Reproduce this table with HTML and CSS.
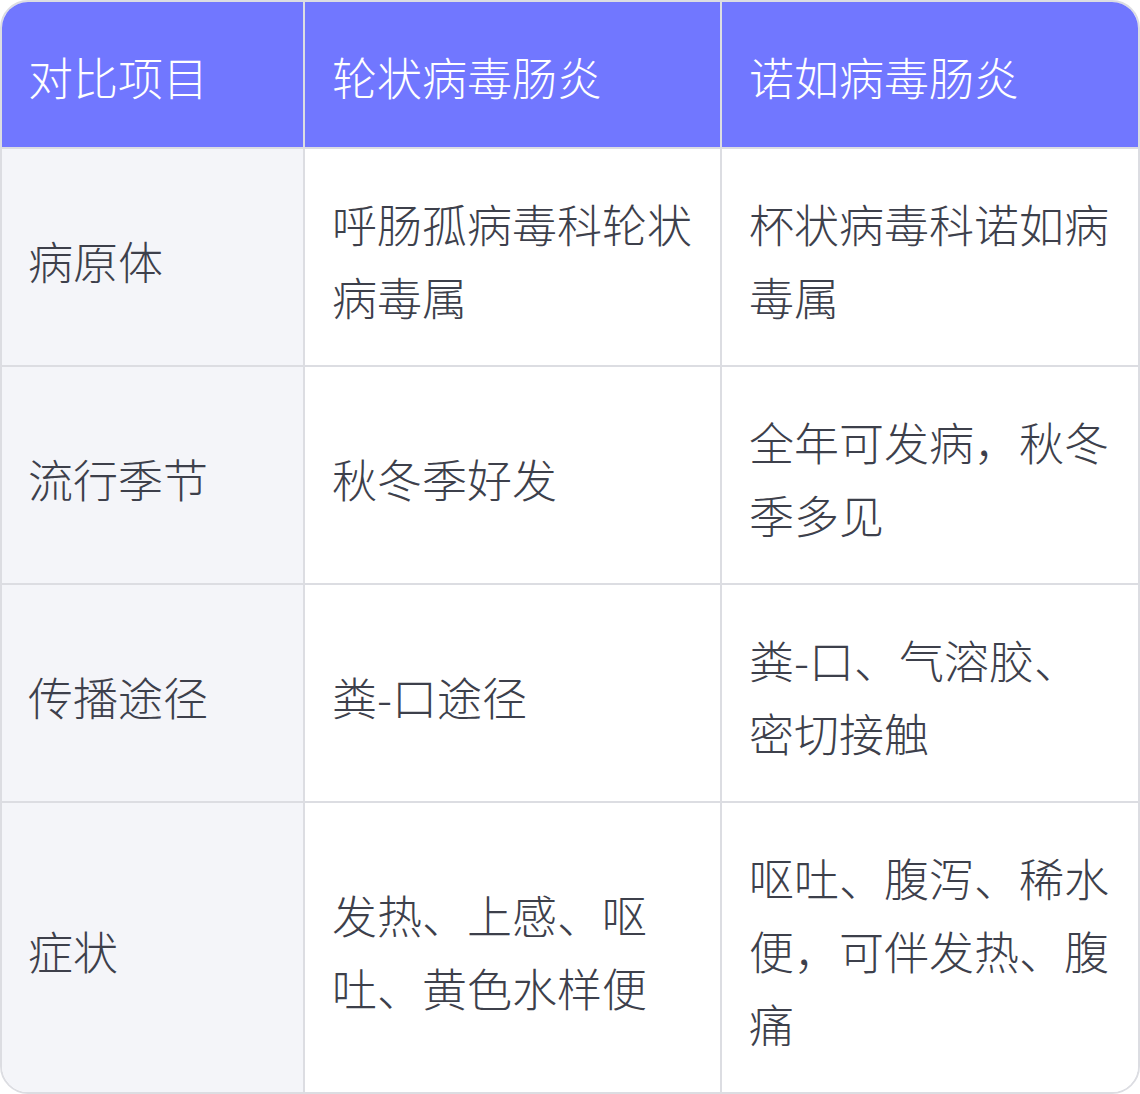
FILE: index.html
```html
<!DOCTYPE html>
<html lang="zh-CN">
<head>
<meta charset="utf-8">
<link rel="stylesheet" href="styles.css">
</head>
<body>
<div class="card">
  <table class="cmp">
    <colgroup>
      <col class="c1"><col class="c2"><col class="c3">
    </colgroup>
    <thead>
      <tr><th>对比项目</th><th>轮状病毒肠炎</th><th>诺如病毒肠炎</th></tr>
    </thead>
    <tbody>
      <tr><td class="key">病原体</td><td>呼肠孤病毒科轮状病毒属</td><td>杯状病毒科诺如病毒属</td></tr>
      <tr><td class="key">流行季节</td><td>秋冬季好发</td><td>全年可发病，秋冬季多见</td></tr>
      <tr><td class="key">传播途径</td><td>粪-口途径</td><td>粪-口、气溶胶、密切接触</td></tr>
      <tr><td class="key">症状</td><td>发热、上感、呕吐、黄色水样便</td><td>呕吐、腹泻、稀水便，可伴发热、腹痛</td></tr>
    </tbody>
  </table>
</div>
</body>
</html>
```

FILE: styles.css
```css
html, body {
  margin: 0;
  padding: 0;
  background: #ffffff;
}
.card {
  width: 1140px;
  box-sizing: border-box;
  border: 2px solid #dcdde2;
  border-radius: 28px;
  overflow: hidden;
  background: #ffffff;
}
.cmp {
  width: 100%;
  border-collapse: collapse;
  border-style: hidden;
  table-layout: fixed;
  font-family: "Noto Sans CJK SC", "Noto Sans", sans-serif;
  font-size: 45px;
  line-height: 73px;
}
.c1 { width: 302px; }
.c2 { width: 417px; }
.c3 { width: 417px; }
.cmp th,
.cmp td {
  border: 2px solid #dcdde2;
  padding: 38px 24px 32px 27px;
  text-align: left;
  vertical-align: middle;
  font-weight: 300;
}
.cmp th:first-child,
.cmp td:first-child {
  padding-left: 26px;
}
.cmp th {
  padding-bottom: 34px;
  background: #7177ff;
  color: #ffffff;
}
.cmp td {
  color: #3d404b;
  background: #ffffff;
}
.cmp td.key {
  background: #f4f5f9;
}
```
